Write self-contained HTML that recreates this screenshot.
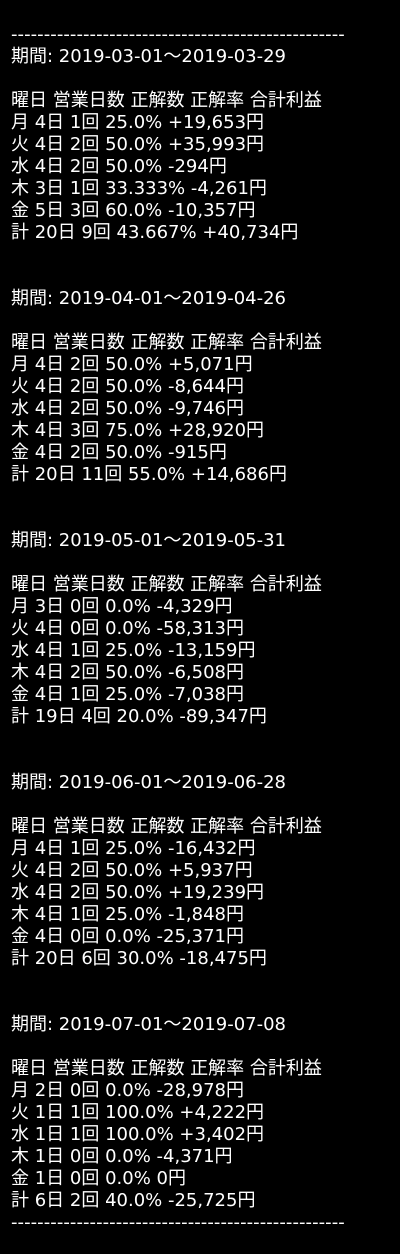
<!DOCTYPE html>
<html><head><meta charset="utf-8"><style>
html,body{margin:0;padding:0;background:#000;}
body{width:400px;height:1254px;overflow:hidden;}
pre{margin:0;padding:24px 0 0 11px;color:#fff;font-family:"DejaVu Sans","Noto Sans CJK JP",sans-serif;font-size:18px;line-height:22px;white-space:pre;}
.d{letter-spacing:0.05px;}
</style></head><body><pre><span class="d">---------------------------------------------------</span>
期間: 2019-03-01～2019-03-29

曜日 営業日数 正解数 正解率 合計利益
月 4日 1回 25.0% +19,653円
火 4日 2回 50.0% +35,993円
水 4日 2回 50.0% -294円
木 3日 1回 33.333% -4,261円
金 5日 3回 60.0% -10,357円
計 20日 9回 43.667% +40,734円


期間: 2019-04-01～2019-04-26

曜日 営業日数 正解数 正解率 合計利益
月 4日 2回 50.0% +5,071円
火 4日 2回 50.0% -8,644円
水 4日 2回 50.0% -9,746円
木 4日 3回 75.0% +28,920円
金 4日 2回 50.0% -915円
計 20日 11回 55.0% +14,686円


期間: 2019-05-01～2019-05-31

曜日 営業日数 正解数 正解率 合計利益
月 3日 0回 0.0% -4,329円
火 4日 0回 0.0% -58,313円
水 4日 1回 25.0% -13,159円
木 4日 2回 50.0% -6,508円
金 4日 1回 25.0% -7,038円
計 19日 4回 20.0% -89,347円


期間: 2019-06-01～2019-06-28

曜日 営業日数 正解数 正解率 合計利益
月 4日 1回 25.0% -16,432円
火 4日 2回 50.0% +5,937円
水 4日 2回 50.0% +19,239円
木 4日 1回 25.0% -1,848円
金 4日 0回 0.0% -25,371円
計 20日 6回 30.0% -18,475円


期間: 2019-07-01～2019-07-08

曜日 営業日数 正解数 正解率 合計利益
月 2日 0回 0.0% -28,978円
火 1日 1回 100.0% +4,222円
水 1日 1回 100.0% +3,402円
木 1日 0回 0.0% -4,371円
金 1日 0回 0.0% 0円
計 6日 2回 40.0% -25,725円
<span class="d">---------------------------------------------------</span></pre></body></html>
